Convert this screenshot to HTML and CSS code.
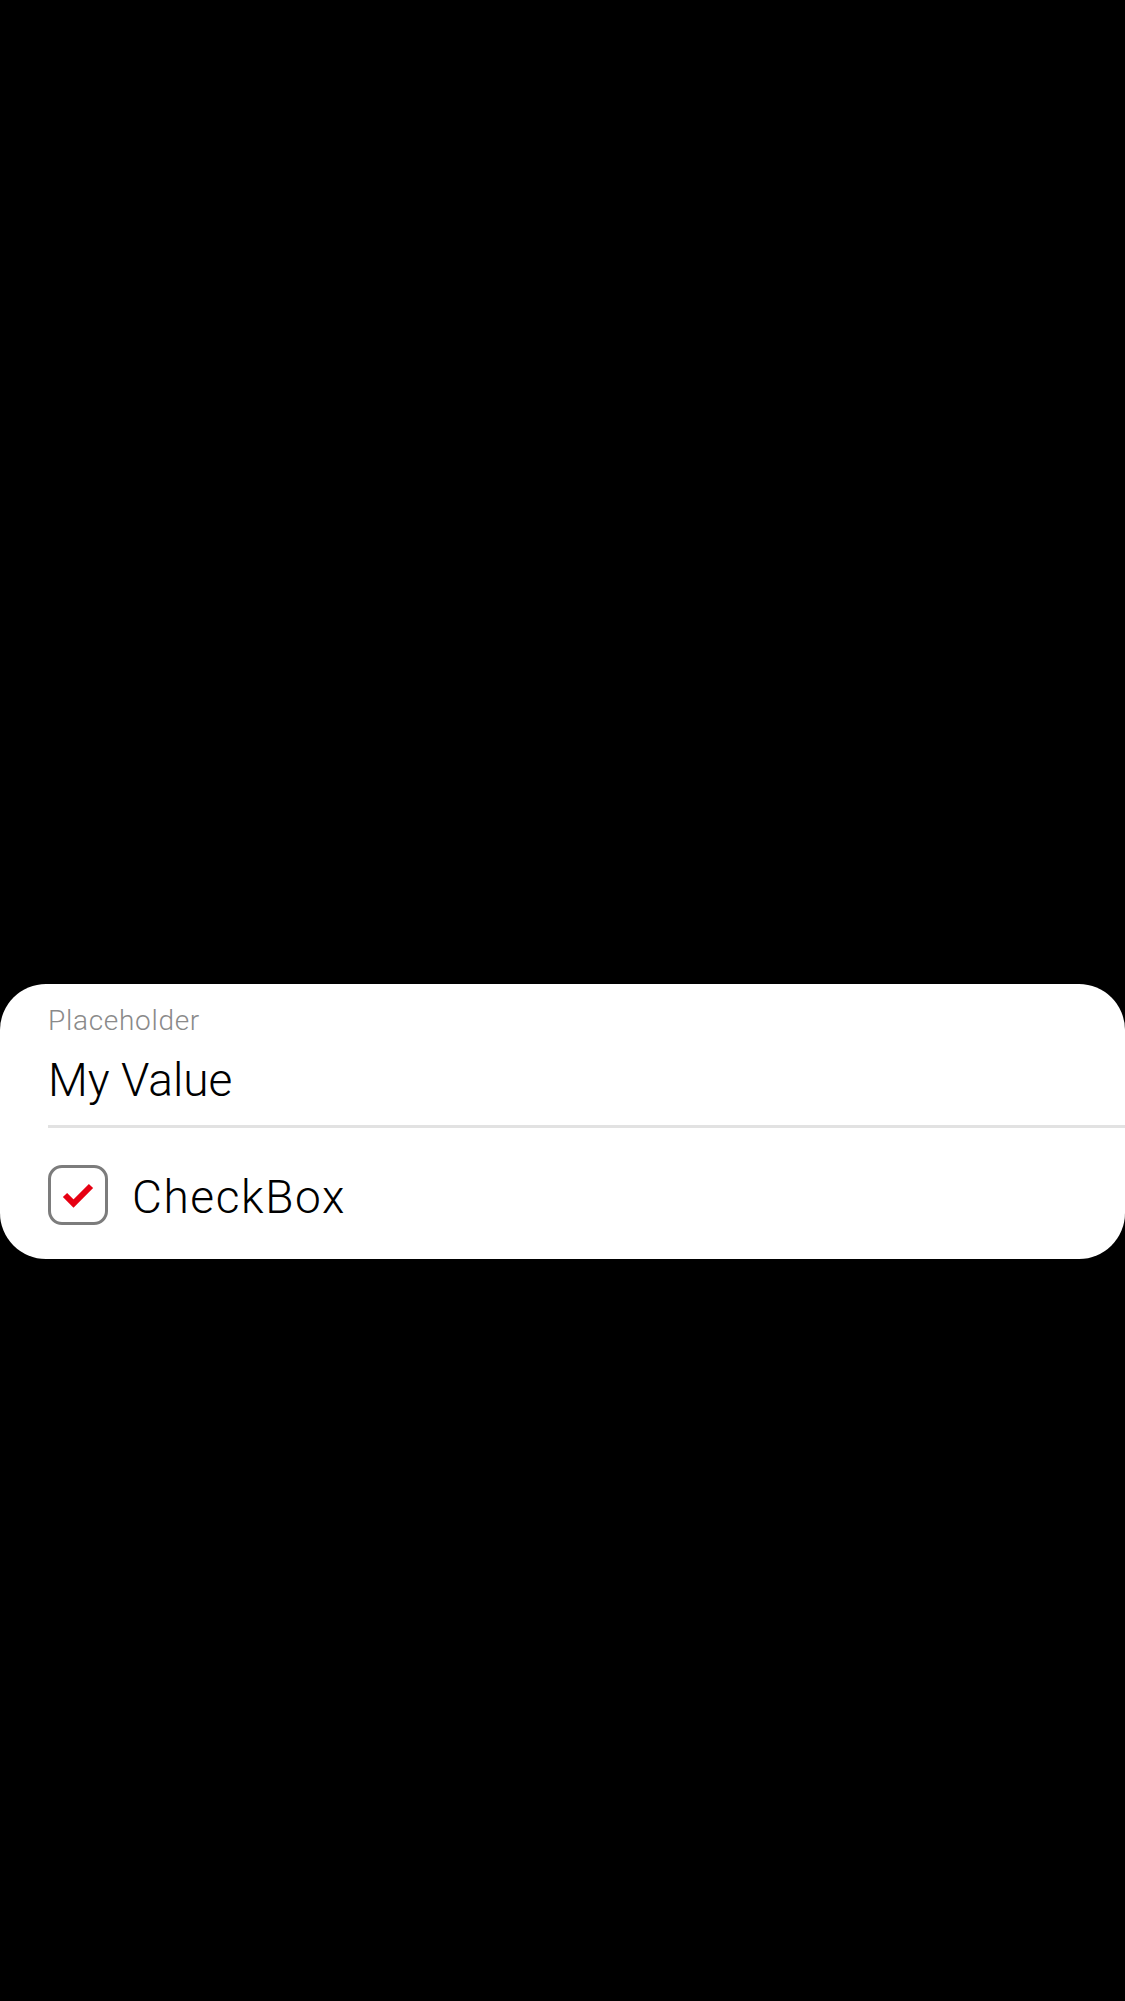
FILE: index.html
```html
<!DOCTYPE html>
<html lang="en">
<head>
<meta charset="utf-8">
<title>Form</title>
<link rel="stylesheet" href="styles.css">
</head>
<body>
  <main class="screen">
    <section class="card">
      <div class="field">
        <div class="field-label">Placeholder</div>
        <div class="field-value">My Value</div>
      </div>
      <div class="divider"></div>
      <label class="check-row">
        <span class="check-box">
          <svg viewBox="0 0 60 60" width="60" height="60" aria-hidden="true">
            <path d="M17 30 L25.5 38.5 L43 21" fill="none" stroke="#e60012" stroke-width="6" stroke-linecap="butt" stroke-linejoin="miter"/>
          </svg>
        </span>
        <span class="check-text">CheckBox</span>
      </label>
    </section>
  </main>
</body>
</html>
```

FILE: styles.css
```css
html, body {
  margin: 0;
  padding: 0;
  background: #000;
}
body {
  width: 1125px;
  height: 2001px;
  overflow: hidden;
  font-family: Roboto, "Liberation Sans", Arial, sans-serif;
  font-weight: 300;
}
.screen {
  padding-top: 984px;
}
.card {
  background: #fff;
  border-radius: 46px;
  height: 275px;
  box-sizing: border-box;
  padding: 23px 0 0 48px;
  display: flex;
  flex-direction: column;
}
.field {
  display: flex;
  flex-direction: column;
}
.field-label {
  font-size: 28px;
  line-height: 28px;
  color: #8a8a8a;
  letter-spacing: 0.7px;
}
.field-value {
  margin-top: 22px;
  font-size: 46px;
  line-height: 46px;
  color: #000;
}
.divider {
  margin-top: 22px;
  height: 2.5px;
  background: #e2e2e2;
}
.check-row {
  margin-top: 37px;
  display: flex;
  align-items: center;
  gap: 24px;
}
.check-box {
  width: 60px;
  height: 60px;
  box-sizing: border-box;
  border: 3px solid #7c7c7c;
  border-radius: 14px;
  position: relative;
  flex: none;
}
.check-box svg {
  position: absolute;
  left: -3px;
  top: -3px;
}
.check-text {
  margin-top: 4px;
  font-size: 46px;
  line-height: 46px;
  color: #000;
  letter-spacing: 1.6px;
}
```
